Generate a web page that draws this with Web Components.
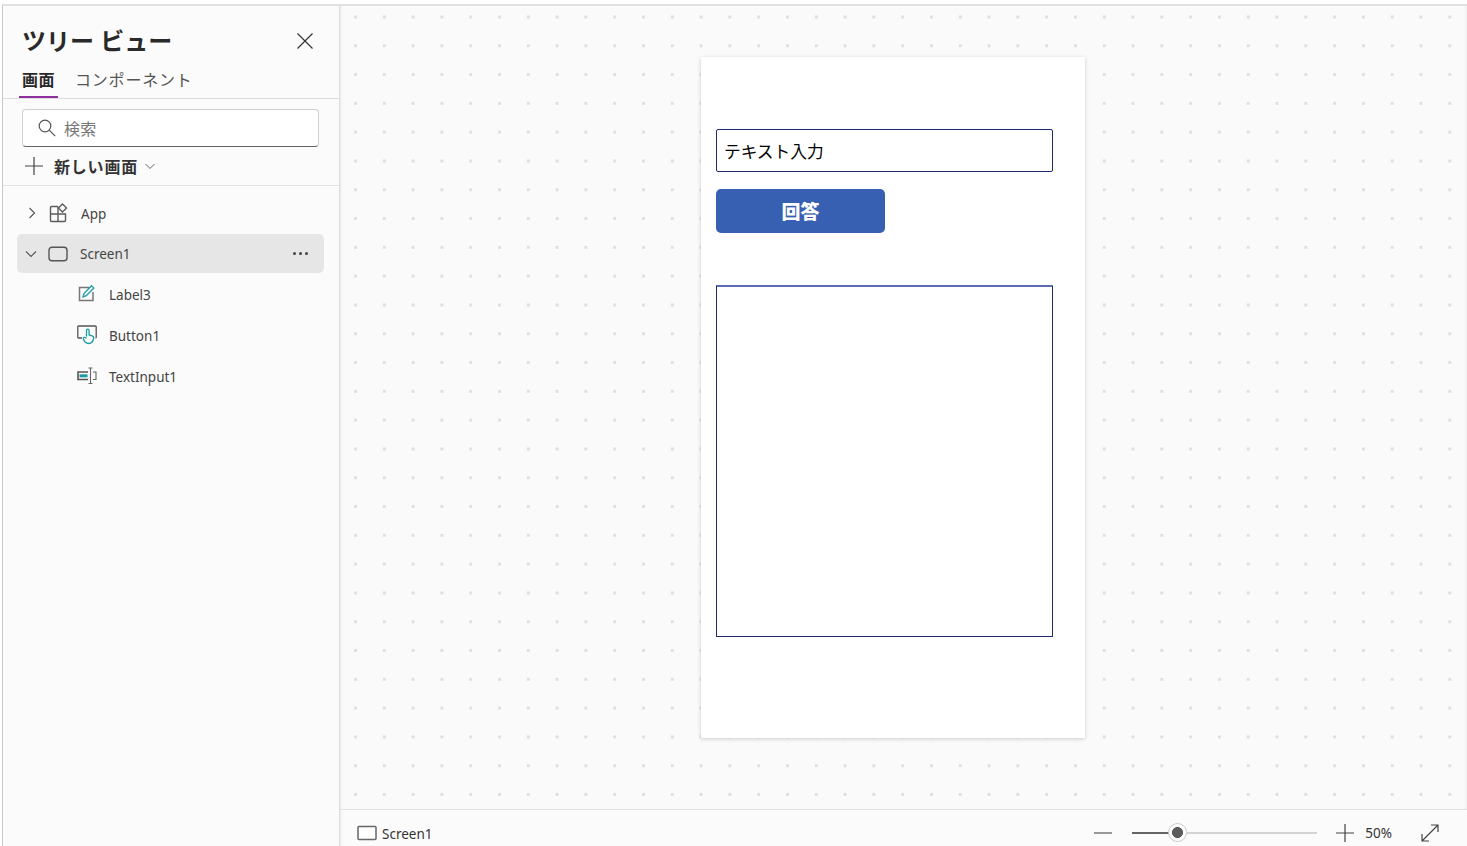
<!DOCTYPE html>
<html lang="ja">
<head>
<meta charset="utf-8">
<title>ツリー ビュー</title>
<style>
  html, body { margin: 0; height: 100%; background: #fff; overflow: hidden; }
  body { font-family: "Noto Sans", "Noto Sans CJK JP", sans-serif; color: #333; }
</style>
</head>
<body>
<studio-app>
  <tree-panel slot="side">
    <tree-row level="0" icon="app" chevron="right">App</tree-row>
    <tree-row level="0" icon="screen" chevron="down" selected>Screen1</tree-row>
    <tree-row level="1" icon="label">Label3</tree-row>
    <tree-row level="1" icon="button">Button1</tree-row>
    <tree-row level="1" icon="input">TextInput1</tree-row>
  </tree-panel>
  <canvas-view slot="canvas">
    <phone-screen></phone-screen>
  </canvas-view>
  <status-bar slot="status"></status-bar>
</studio-app>

<script>
const icons = {
  app: `<svg width="20" height="20" viewBox="0 0 20 20" fill="none" stroke="#5c5c5c" stroke-width="1.400"><path d="M10 3.500H3.500a1 1 0 0 0-1 1v13a1 1 0 0 0 1 1h13a1 1 0 0 0 1-1v-6.500H2.500M10 3.500v15"/><path d="M14.500 1l4 4-4 4-4-4z"/></svg>`,
  screen: `<svg width="20" height="16" viewBox="0 0 20 16" fill="none" stroke="#555" stroke-width="1.400"><rect x="1" y="1.200" width="18" height="13.500" rx="3"/></svg>`,
  label: `<svg width="18" height="18" viewBox="0 0 18 18" fill="none"><path d="M11.500 3.500H1.500v13h13.500V8" stroke="#777" stroke-width="1.500"/><path d="M5 13l1-3.500 7.500-7.800 2.300 2.200-7.500 7.800z" stroke="#1a9ba1" stroke-width="1.300"/></svg>`,
  button: `<svg width="20" height="20" viewBox="0 0 20 20" fill="none"><path d="M5 13H1.500a.7 .7 0 0 1-.7-.7V1.700a.7 .7 0 0 1 .7-.7h17a.7 .7 0 0 1 .7 .7v10.600a.7 .7 0 0 1-.7 .7" stroke="#555" stroke-width="1.300"/><path d="M9.500 11.500V5.500a1.300 1.300 0 0 1 2.600 0v4.500l3 .800c1.200 .3 1.700 1.200 1.500 2.400-.4 3-2 5.300-5 5.300-2.800 0-4.400-2-5.400-5l.6-1c.7-.4 1.600-.2 2.700 .8" stroke="#1a9ba1" stroke-width="1.300"/></svg>`,
  input: `<svg width="20" height="18" viewBox="0 0 20 18" fill="none"><path d="M11 5H1v7.500H11" stroke="#555" stroke-width="1.600"/><path d="M16 5h3v7.500h-3" stroke="#666" stroke-width="1.100"/><rect x="2.500" y="7.300" width="8" height="3" fill="#1a9ba1"/><path d="M11.500 1h4M13.500 1v15.500M11.500 16.500h4" stroke="#666" stroke-width="1.100"/></svg>`
}

const chevrons = {
  right: `<svg width="10" height="12" viewBox="0 0 10 12" fill="none" stroke="#555" stroke-width="1.100"><path d="M2.500 1l5 5-5 5"/></svg>`,
  down: `<svg width="12" height="10" viewBox="0 0 12 10" fill="none" stroke="#555" stroke-width="1.100"><path d="M1 2.500l5 5 5-5"/></svg>`
}

class StudioApp extends HTMLElement {
  constructor() {
    super()
    this.attachShadow({ mode: 'open' }).innerHTML = `
      <style>
        :host {
          display: grid;
          box-sizing: border-box;
          width: 1467px;
          height: 846px;
          padding: 4px 0 0 2px;
          grid-template-columns: 338px 1fr;
          grid-template-rows: 1fr 37px;
          grid-template-areas: "side canvas" "side status";
        }
        ::slotted([slot=side]) { grid-area: side; }
        ::slotted([slot=canvas]) { grid-area: canvas; }
        ::slotted([slot=status]) { grid-area: status; }
      </style>
      <slot name="side"></slot>
      <slot name="canvas"></slot>
      <slot name="status"></slot>
    `
  }
}

class TreePanel extends HTMLElement {
  constructor() {
    super()
    this.attachShadow({ mode: 'open' }).innerHTML = `
      <style>
        :host {
          display: flex;
          flex-direction: column;
          box-sizing: border-box;
          background: #fbfbfb;
          border-top: 2px solid #e1e1e1;
          border-left: 1px solid #c8c8c8;
          border-right: 1px solid #dcdcdc;
          min-height: 0;
        }
        .title {
          display: flex;
          justify-content: space-between;
          align-items: center;
          height: 30px;
          margin-top: 20px;
          padding: 0 26px 0 19px;
          font-size: 24px;
          font-weight: 700;
          line-height: 30px;
          color: #292929;
        }
        .tabs {
          display: flex;
          gap: 20px;
          height: 43px;
          box-sizing: border-box;
          padding: 0 0 0 19px;
          border-bottom: 1px solid #dedede;
          font-size: 16px;
          letter-spacing: .8px;
        }
        .tab { position: relative; padding-top: 12px; line-height: 24px; color: #555; }
        .tab.on { font-weight: 700; color: #292929; letter-spacing: .5px; }
        .tab.on::after {
          content: '';
          position: absolute;
          left: -3px;
          right: -3px;
          bottom: 0;
          height: 2px;
          background: #8f2f9f;
        }
        .search {
          display: flex;
          align-items: center;
          gap: 8px;
          box-sizing: border-box;
          height: 38px;
          margin: 10px 20px 0 19px;
          padding-left: 15px;
          background: #fff;
          border: 1px solid #d0d0d0;
          border-bottom-color: #666;
          border-radius: 4px;
          font-size: 16px;
          letter-spacing: .3px;
          color: #777;
        }
        .new {
          display: flex;
          align-items: center;
          height: 38px;
          padding-left: 22px;
          border-bottom: 1px solid #e0e0e0;
          font-size: 16px;
          font-weight: 700;
          letter-spacing: .8px;
          color: #333;
        }
        .new span { margin: 0 7px 0 11px; }
        .list { display: flex; flex-direction: column; padding: 8px 15px 0 14px; }
      </style>
      <div class="title">
        <span>ツリー ビュー</span>
        <svg width="16" height="16" viewBox="0 0 16 16" stroke="#333" stroke-width="1.200"><path d="M.5 .5l15 15M15.500 .5l-15 15"/></svg>
      </div>
      <div class="tabs">
        <div class="tab on">画面</div>
        <div class="tab">コンポーネント</div>
      </div>
      <div class="search">
        <svg width="18" height="18" viewBox="0 0 18 18" fill="none" stroke="#555" stroke-width="1.200"><circle cx="7" cy="7" r="5.800"/><path d="M11.200 11.200l6 6"/></svg>
        <span>検索</span>
      </div>
      <div class="new">
        <svg width="18" height="18" viewBox="0 0 18 18" stroke="#444" stroke-width="1.200"><path d="M9 0v18M0 9h18"/></svg>
        <span>新しい画面</span>
        <svg width="10" height="7" viewBox="0 0 10 7" fill="none" stroke="#666"><path d="M.5 1l4.500 4.500L9.500 1"/></svg>
      </div>
      <div class="list"><slot></slot></div>
    `
  }
}

class TreeRow extends HTMLElement {
  constructor() {
    super()
    const level = this.getAttribute('level')
    const chevron = this.getAttribute('chevron')
    const selected = this.hasAttribute('selected')
    const icon = this.getAttribute('icon')
    const left = icon == 'label' ? 1 : level == 1 ? .5 : selected ? 10 : 9
    const right = icon == 'label' ? 12 : level == 1 ? 12.500 : icon == 'app' ? 13 : 12
    const lift = icon == 'label' ? 4 : level == 1 || icon == 'app' ? 2 : 0
    this.attachShadow({ mode: 'open' }).innerHTML = `
      <style>
        :host {
          display: flex;
          align-items: center;
          box-sizing: border-box;
          height: ${level == 1 ? 41 : selected ? 39 : 40}px;
          margin-top: ${icon == 'label' ? 1 : 0}px;
          font-size: 13.500px;
          color: #444;
          border-radius: 5px;
          background: ${selected ? '#e6e6e6' : 'none'};
          padding-left: ${level == 1 ? 59 : selected ? 7 : 8}px;
        }
        .chev { width: 14px; display: flex; justify-content: center; margin-bottom: ${icon == 'app' ? 2 : 0}px; }
        .ico { width: 20px; display: flex; justify-content: center; margin: 0 ${right}px ${lift}px ${left}px; }
        .text { flex: 1; }
        .more { display: flex; gap: 3px; margin-right: 16px; }
        .more i { width: 3px; height: 3px; border-radius: 50%; background: #444; }
      </style>
      ${level == 1 ? '' : `<div class="chev">${chevrons[chevron]}</div>`}
      <div class="ico">${icons[icon]}</div>
      <div class="text"><slot></slot></div>
      ${selected ? '<div class="more"><i></i><i></i><i></i></div>' : ''}
    `
  }
}

class CanvasView extends HTMLElement {
  constructor() {
    super()
    this.attachShadow({ mode: 'open' }).innerHTML = `
      <style>
        :host {
          display: block;
          box-sizing: border-box;
          min-height: 0;
          padding: 51px 0 0 361px;
          border-top: 2px solid #e1e1e1;
          background-color: #fafafa;
          background-image: radial-gradient(circle at 1.500px 1.500px, #e0e0e0 1.400px, transparent 1.700px);
          background-size: 28.800px 28.800px;
          background-position: 14px 9.500px;
          box-shadow: inset 3px 0 3px -2px rgba(0,0,0,.07), inset -3px 0 3px -2px rgba(0,0,0,.07);
        }
      </style>
      <slot></slot>
    `
  }
}

class PhoneScreen extends HTMLElement {
  constructor() {
    super()
    this.attachShadow({ mode: 'open' }).innerHTML = `
      <style>
        :host {
          display: block;
          box-sizing: border-box;
          width: 384px;
          height: 681px;
          padding: 72px 32px 0 15px;
          background: #fff;
          box-shadow: 0 1px 4px rgba(0,0,0,.18);
        }
        .input {
          box-sizing: border-box;
          height: 43px;
          padding-left: 7px;
          border: 1px solid #1e2a78;
          border-radius: 2px;
          font-size: 16.700px;
          line-height: 43px;
          color: #000;
        }
        .btn {
          width: 169px;
          height: 44px;
          margin-top: 17px;
          background: #3860b2;
          border-radius: 5px;
          color: #fff;
          font-size: 19px;
          font-weight: 900;
          line-height: 46px;
          text-align: center;
        }
        .label {
          box-sizing: border-box;
          height: 352px;
          margin-top: 52px;
          border: 1px solid #1e2a78;
          border-top: 2px solid #5d6cb4;
        }
      </style>
      <div class="input">テキスト入力</div>
      <div class="btn">回答</div>
      <div class="label"></div>
    `
  }
}

class StatusBar extends HTMLElement {
  constructor() {
    super()
    this.attachShadow({ mode: 'open' }).innerHTML = `
      <style>
        :host {
          display: flex;
          align-items: center;
          box-sizing: border-box;
          padding: 10px 28px 0 17px;
          background: #fbfbfb;
          border-top: 1px solid #e0e0e0;
          box-shadow: inset 3px 0 3px -2px rgba(0,0,0,.07);
          font-size: 13.500px;
          color: #333;
        }
        .name { display: flex; align-items: center; gap: 5px; flex: 1; }
        .name span { padding-top: 2px; }
        .track {
          position: relative;
          width: 185px;
          height: 2px;
          margin: 0 19px 0 20px;
          background: linear-gradient(to right, #666 40px, #d4d4d4 40px);
        }
        .thumb {
          position: absolute;
          left: 36px;
          top: -9px;
          width: 19px;
          height: 19px;
          box-sizing: border-box;
          border: 1px solid #ccc;
          border-radius: 50%;
          background: radial-gradient(circle, #5c5c5c 5.200px, #fff 5.800px);
        }
        .pct { margin: 0 29px 0 11px; font-size: 13.500px; }
        svg { display: block; }
      </style>
      <div class="name">
        <svg width="20" height="16" viewBox="0 0 20 16" fill="#fff" stroke="#666" stroke-width="1.500"><rect x="1" y="1.500" width="18" height="13" rx="1"/></svg>
        <span>Screen1</span>
      </div>
      <svg width="18" height="2" viewBox="0 0 18 2"><path d="M0 1h18" stroke="#777" stroke-width="1.500"/></svg>
      <div class="track"><div class="thumb"></div></div>
      <svg width="18" height="18" viewBox="0 0 18 18" stroke="#444" stroke-width="1.200"><path d="M9 0v18M0 9h18"/></svg>
      <div class="pct">50%</div>
      <svg width="18" height="18" viewBox="0 0 18 18" fill="none" stroke="#444" stroke-width="1.200"><path d="M1 17L17 1M10 1h7v7M1 10v7h7"/></svg>
    `
  }
}

customElements.define('studio-app', StudioApp)
customElements.define('tree-panel', TreePanel)
customElements.define('tree-row', TreeRow)
customElements.define('canvas-view', CanvasView)
customElements.define('phone-screen', PhoneScreen)
customElements.define('status-bar', StatusBar)
</script>
</body>
</html>
